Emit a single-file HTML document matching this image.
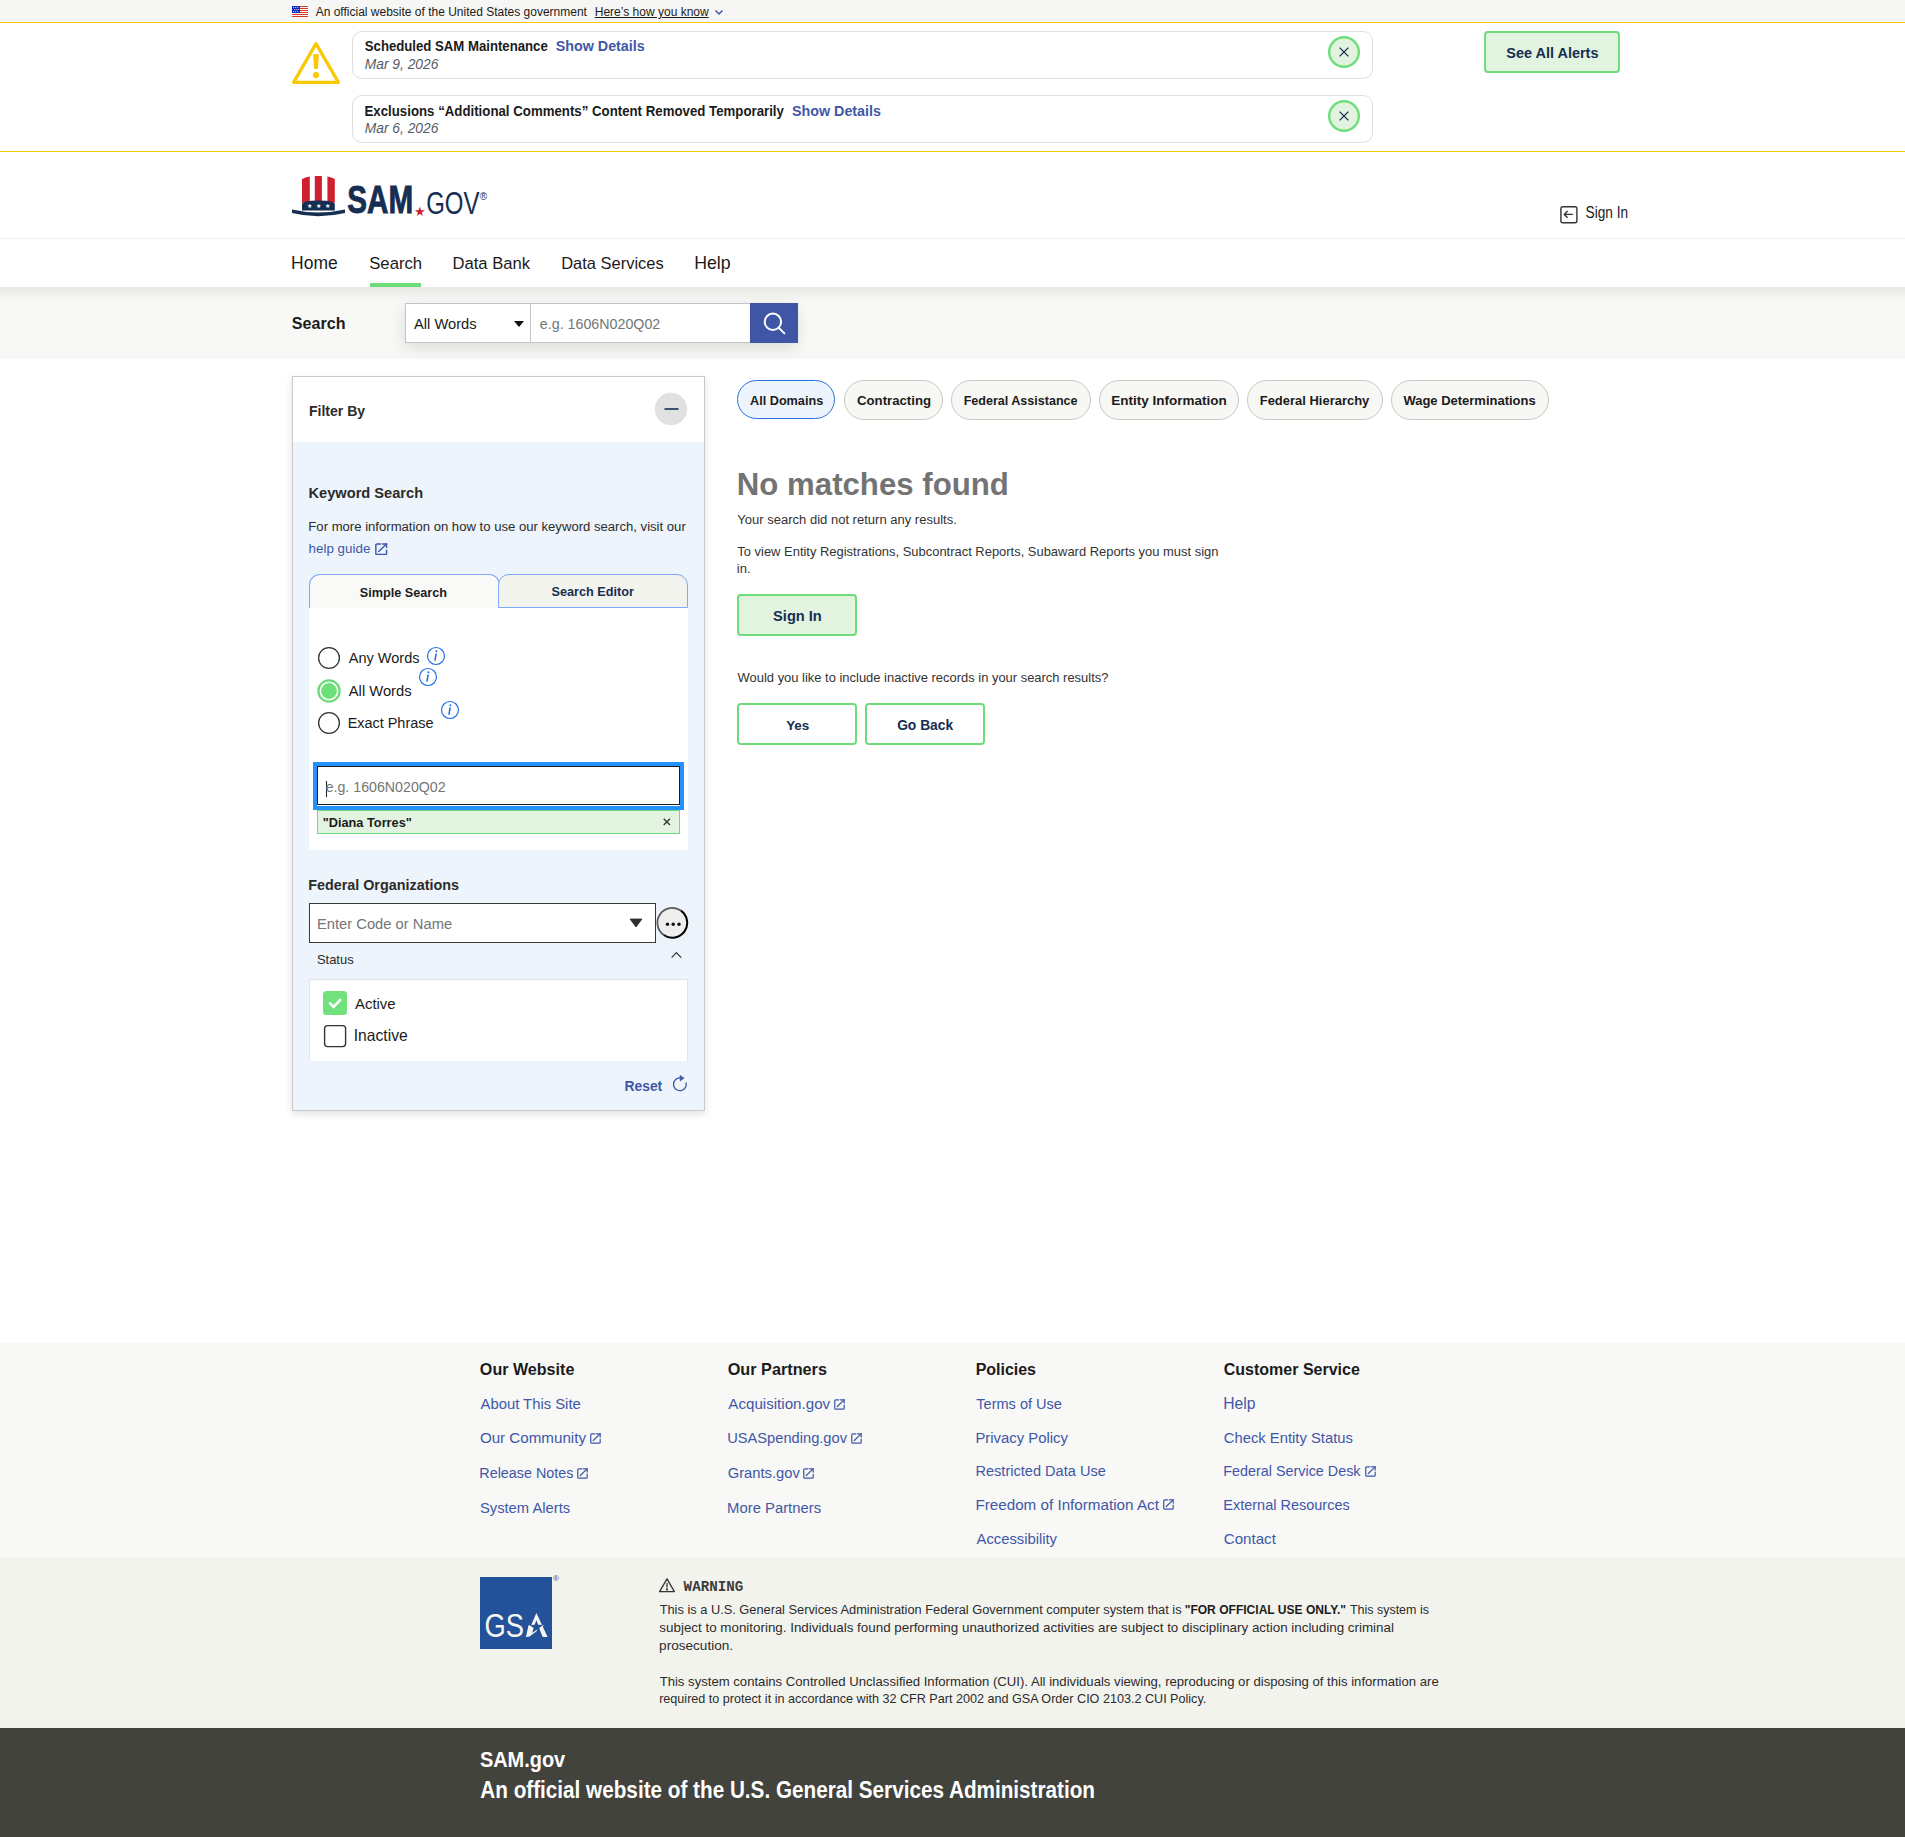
<!DOCTYPE html><html><head><meta charset="utf-8"><style>html,body{margin:0;padding:0;}body{width:1905px;height:1837px;position:relative;overflow:hidden;background:#fff;font-family:"Liberation Sans",sans-serif;}.t{position:absolute;white-space:nowrap;line-height:1;}</style></head><body>
<div style="position:absolute;left:0px;top:0px;width:1905px;height:22px;background:#f6f6f5;"></div>
<div style="position:absolute;left:0px;top:22px;width:1905px;height:1px;background:#f9c800;"></div>
<div style="position:absolute;left:0px;top:151px;width:1905px;height:1px;background:#f9c800;"></div>
<svg style="position:absolute;left:292px;top:5px" width="16" height="12" viewBox="0 0 16 12"><rect width="16" height="12" fill="#fff"/><rect x="0" y="1" width="16" height="1" fill="#d83a1f"/><rect x="0" y="3" width="16" height="1" fill="#d83a1f"/><rect x="0" y="5" width="16" height="1" fill="#d83a1f"/><rect x="0" y="7" width="16" height="1" fill="#d83a1f"/><rect x="0" y="9" width="16" height="1" fill="#d83a1f"/><rect x="0" y="11" width="16" height="1" fill="#d83a1f"/><rect x="0" y="1" width="8" height="7" fill="#0b28b8"/><circle cx="1.7" cy="2.5" r="0.55" fill="#fff"/><circle cx="3.7" cy="2.5" r="0.55" fill="#fff"/><circle cx="5.7" cy="2.5" r="0.55" fill="#fff"/><circle cx="2.7" cy="4.5" r="0.55" fill="#fff"/><circle cx="4.7" cy="4.5" r="0.55" fill="#fff"/><circle cx="6.7" cy="4.5" r="0.55" fill="#fff"/><circle cx="1.7" cy="6.5" r="0.55" fill="#fff"/><circle cx="3.7" cy="6.5" r="0.55" fill="#fff"/><circle cx="5.7" cy="6.5" r="0.55" fill="#fff"/></svg>
<svg style="position:absolute;left:713px;top:7px" width="12" height="10" viewBox="0 0 12 10" fill="none" stroke="#3f57a6" stroke-width="1.5"><path d="M2.5 3.5 L6 7 L9.5 3.5"/></svg>
<svg style="position:absolute;left:288px;top:38px" width="57" height="50" viewBox="0 0 57 50"><path d="M28 5.6 L5.6 44.4 H50.4 Z" fill="none" stroke="#f9c800" stroke-width="3.2" stroke-linejoin="round"/><path d="M25.2 17 Q25.2 15.9 26.3 15.9 H29.7 Q30.8 15.9 30.8 17 L30 30.2 Q29.9 31 29 31 H27 Q26.1 31 26 30.2 Z" fill="#f9c800"/><circle cx="28" cy="37" r="3.1" fill="#f9c800"/></svg>
<div style="position:absolute;left:352px;top:31px;width:1019px;height:46px;border:1px solid #dcdedf;border-radius:10px;background:#fff;"></div>
<svg style="position:absolute;left:1327px;top:35px" width="34" height="34" viewBox="0 0 34 34"><circle cx="17" cy="17" r="14.8" fill="#e2f4e0" stroke="#6ddc79" stroke-width="2.4"/><path d="M12.6 12.6 L21.4 21.4 M21.4 12.6 L12.6 21.4" stroke="#162e51" stroke-width="1.3"/></svg>
<div style="position:absolute;left:352px;top:95px;width:1019px;height:46px;border:1px solid #dcdedf;border-radius:10px;background:#fff;"></div>
<svg style="position:absolute;left:1327px;top:99px" width="34" height="34" viewBox="0 0 34 34"><circle cx="17" cy="17" r="14.8" fill="#e2f4e0" stroke="#6ddc79" stroke-width="2.4"/><path d="M12.6 12.6 L21.4 21.4 M21.4 12.6 L12.6 21.4" stroke="#162e51" stroke-width="1.3"/></svg>
<div style="position:absolute;left:1484px;top:31px;width:132px;height:38px;border:2px solid #6ddc79;border-radius:4px;background:#e2f4e0;"></div>
<div style="position:absolute;left:0px;top:238px;width:1905px;height:1px;background:#f1f1ee;"></div>
<svg style="position:absolute;left:290px;top:174px" width="200" height="44" viewBox="0 0 200 44"><path d="M12 5 Q15.5 3.3 19.8 2.6 V28.8 H12 Z" fill="#d0202f"/><path d="M24.8 2 H31.9 V28.8 H24.8 Z" fill="#d0202f"/><path d="M37.4 2.6 Q41.7 3.3 44.8 5 V28.8 H37.4 Z" fill="#d0202f"/><path d="M12 36.5 V30.5 Q12 26.6 28.4 26.6 Q44.8 26.6 44.8 30.5 V36.5 Z" fill="#162e51"/><path d="M2 35.4 Q28 41.5 55 35.4 V39 Q28 45.5 2 39 Z" fill="#162e51"/><text x="16.6" y="34.2" font-size="6" fill="#fff" font-family="Liberation Sans">★</text><text x="25.6" y="34.2" font-size="6" fill="#fff" font-family="Liberation Sans">★</text><text x="34.6" y="34.2" font-size="6" fill="#fff" font-family="Liberation Sans">★</text><text x="57.3" y="39" font-size="38.3" font-weight="700" fill="#162e51" stroke="#162e51" stroke-width="0.9" font-family="Liberation Sans" textLength="65.8" lengthAdjust="spacingAndGlyphs">SAM</text><text x="123.5" y="41.5" font-size="13" fill="#d0202f" font-family="Liberation Sans">★</text><text x="136.2" y="39.6" font-size="32" fill="#162e51" font-family="Liberation Sans" textLength="53.3" lengthAdjust="spacingAndGlyphs">GOV</text><text x="189.8" y="26" font-size="10" fill="#162e51" font-family="Liberation Sans">®</text></svg>
<svg style="position:absolute;left:1559px;top:205px" width="20" height="20" viewBox="0 0 20 20" fill="none" stroke="#333" stroke-width="1.4"><rect x="1.9" y="1.8" width="16" height="16" rx="2"/><path d="M5.4 9.4 H13.9 M8.6 6.1 L5.3 9.4 L8.6 12.7" stroke-linejoin="round"/></svg>
<div style="position:absolute;left:370px;top:283px;width:51px;height:4px;background:#6ddc79;"></div>
<div style="position:absolute;left:0px;top:287px;width:1905px;height:72px;background:#f8f8f7;"></div>
<div style="position:absolute;left:0px;top:287px;width:1905px;height:14px;background:linear-gradient(rgba(0,0,0,0.07),rgba(0,0,0,0));"></div>
<div style="position:absolute;left:405px;top:303px;width:392px;height:40px;box-shadow:0 5px 16px rgba(0,0,0,0.12);"></div>
<div style="position:absolute;left:405px;top:303px;width:125px;height:38px;border:1px solid #c4c4c4;background:#fff;"></div>
<svg style="position:absolute;left:513px;top:320px" width="12" height="8" viewBox="0 0 12 8"><path d="M1 1 H11 L6 7 Z" fill="#111"/></svg>
<div style="position:absolute;left:530px;top:303px;width:219px;height:38px;border:1px solid #c4c4c4;border-left:1px solid #c4c4c4;background:#fff;"></div>
<div style="position:absolute;left:750px;top:303px;width:48px;height:40px;background:#3f56a6;"></div>
<svg style="position:absolute;left:760px;top:310px" width="28" height="28" viewBox="0 0 28 28" fill="none" stroke="#fff" stroke-width="2"><circle cx="12.9" cy="11.8" r="8.2"/><path d="M18.6 17.6 L24.4 23.4" stroke-linecap="round"/></svg>
<div style="position:absolute;left:292px;top:376px;width:411px;height:733px;border:1px solid #c9c9c9;background:#fff;box-shadow:0 3px 8px rgba(0,0,0,0.12);"></div>
<div style="position:absolute;left:293px;top:442px;width:411px;height:668px;background:#edf4fb;"></div>
<svg style="position:absolute;left:654px;top:392px" width="34" height="34" viewBox="0 0 34 34"><circle cx="17" cy="17" r="16.2" fill="#e1e1e1"/><path d="M10.5 17 H24.5" stroke="#162e51" stroke-width="1.6"/></svg>
<svg style="position:absolute;left:375px;top:542.5px" width="12.5" height="12.5" viewBox="0 0 12 12" fill="none" stroke="#3f57a6" stroke-width="1.35" stroke-linecap="round"><path d="M5.2 0.9 H1.9 Q0.8 0.9 0.8 2 V10 Q0.8 11.1 1.9 11.1 H10 Q11.1 11.1 11.1 10 V6.8"/><path d="M7 0.9 H11.1 V4.4"/><path d="M11 1 L3.6 8.2"/></svg>
<div style="position:absolute;left:309px;top:574px;width:189px;height:34px;border:1px solid #7eaaf8;border-bottom:none;border-radius:11px 11px 0 0;background:#f9f9f7;"></div>
<div style="position:absolute;left:498px;top:574px;width:188px;height:32px;border:1px solid #7eaaf8;border-radius:11px 11px 0 0;background:#f3f3ee;"></div>
<div style="position:absolute;left:309px;top:608px;width:379px;height:242px;background:#fff;"></div>
<svg style="position:absolute;left:316px;top:645px" width="28" height="92" viewBox="0 0 28 92"><circle cx="13" cy="13" r="10.4" fill="#fff" stroke="#333" stroke-width="1.3"/><circle cx="13" cy="46" r="10.6" fill="#fff" stroke="#6bdc79" stroke-width="2.3"/><circle cx="13" cy="46" r="7.9" fill="#6ddf7b"/><circle cx="13" cy="78" r="10.4" fill="#fff" stroke="#333" stroke-width="1.3"/></svg>
<svg style="position:absolute;left:426.2px;top:646.0px" width="20" height="20" viewBox="0 0 20 20"><circle cx="10" cy="10" r="8.5" fill="none" stroke="#1f6ee4" stroke-width="1.2"/><circle cx="10.4" cy="5.2" r="0.95" fill="#1f6ee4"/><path d="M10.1 8 L9 14.2" stroke="#1f6ee4" stroke-width="1.5" stroke-linecap="round"/></svg>
<svg style="position:absolute;left:418.2px;top:667.1px" width="20" height="20" viewBox="0 0 20 20"><circle cx="10" cy="10" r="8.5" fill="none" stroke="#1f6ee4" stroke-width="1.2"/><circle cx="10.4" cy="5.2" r="0.95" fill="#1f6ee4"/><path d="M10.1 8 L9 14.2" stroke="#1f6ee4" stroke-width="1.5" stroke-linecap="round"/></svg>
<svg style="position:absolute;left:440.3px;top:700.2px" width="20" height="20" viewBox="0 0 20 20"><circle cx="10" cy="10" r="8.5" fill="none" stroke="#1f6ee4" stroke-width="1.2"/><circle cx="10.4" cy="5.2" r="0.95" fill="#1f6ee4"/><path d="M10.1 8 L9 14.2" stroke="#1f6ee4" stroke-width="1.5" stroke-linecap="round"/></svg>
<div style="position:absolute;left:313px;top:762px;width:363px;height:39.5px;border:4px solid #2491ff;"></div>
<div style="position:absolute;left:317px;top:766px;width:363px;height:39px;border:1.5px solid #1b1b1b;background:#fff;box-sizing:border-box;"></div>
<div style="position:absolute;left:326px;top:781px;width:1px;height:16px;background:#1b1b1b;"></div>
<div style="position:absolute;left:317px;top:810px;width:361px;height:22px;border:1px solid #6ddc79;background:#e2f4e0;"></div>
<svg style="position:absolute;left:661px;top:816px" width="12" height="12" viewBox="0 0 12 12"><path d="M2.7 2.7 L9 9 M9 2.7 L2.7 9" stroke="#333" stroke-width="1.3"/></svg>
<div style="position:absolute;left:309px;top:903px;width:345px;height:38px;border:1.4px solid #3a3a35;background:#fff;"></div>
<svg style="position:absolute;left:629px;top:918px" width="14" height="10" viewBox="0 0 14 10"><path d="M1 1 H13 L7 9 Z" fill="#2e2e2a" stroke="#2e2e2a" stroke-width="0.8" stroke-linejoin="round"/></svg>
<svg style="position:absolute;left:655px;top:906px" width="34" height="34" viewBox="0 0 34 34"><circle cx="17.3" cy="16.8" r="14.9" fill="#eeeeee"/><path d="M25.85 4.59 A14.9 14.9 0 0 0 8.75 29.01" fill="none" stroke="#5a5a5a" stroke-width="1.8"/><path d="M8.75 29.01 A14.9 14.9 0 0 0 25.85 4.59" fill="none" stroke="#000" stroke-width="2"/><circle cx="12.5" cy="18.2" r="1.7" fill="#111"/><circle cx="18.2" cy="18.2" r="1.7" fill="#111"/><circle cx="24" cy="18.2" r="1.7" fill="#111"/></svg>
<svg style="position:absolute;left:669px;top:949px" width="16" height="12" viewBox="0 0 16 12" fill="none" stroke="#333" stroke-width="1.2"><path d="M2.6 8.6 L7.4 3.6 L12.2 8.6"/></svg>
<div style="position:absolute;left:309px;top:979px;width:377px;height:81px;border:1px solid #e3e3e3;border-bottom:none;background:#fff;"></div>
<svg style="position:absolute;left:322px;top:990px" width="26" height="26" viewBox="0 0 26 26"><rect x="1" y="1" width="24" height="24" rx="3.5" fill="#70e17b"/><path d="M7.2 12.6 L11.6 16.8 L19 9.2" fill="none" stroke="#fff" stroke-width="2.6"/></svg>
<svg style="position:absolute;left:322px;top:1023px" width="26" height="26" viewBox="0 0 26 26"><rect x="2.6" y="2.6" width="21" height="21" rx="3" fill="#fff" stroke="#333" stroke-width="1.4"/></svg>
<svg style="position:absolute;left:670px;top:1074px" width="20" height="20" viewBox="0 0 20 20" fill="none" stroke="#3f57a6" stroke-width="1.3"><path d="M16 8.4 A6.4 6.4 0 1 1 10.2 3.9"/><path d="M10 1.4 L14.1 4.1 L10.2 6.9 Z" fill="#3f57a6" stroke-width="0.6"/></svg>
<div style="position:absolute;left:737.1px;top:380px;width:95.5px;height:37px;border:1.5px solid #2b72de;border-radius:20px;background:#eef4fb;"></div>
<div style="position:absolute;left:844.1px;top:380px;width:96.5px;height:37.5px;border:1px solid #c9c9c6;border-radius:20px;background:#f7f7f4;"></div>
<div style="position:absolute;left:951.1px;top:380px;width:137.4999999999999px;height:37.5px;border:1px solid #c9c9c6;border-radius:20px;background:#f7f7f4;"></div>
<div style="position:absolute;left:1099.0px;top:380px;width:137.70000000000005px;height:37.5px;border:1px solid #c9c9c6;border-radius:20px;background:#f7f7f4;"></div>
<div style="position:absolute;left:1247.1px;top:380px;width:133.60000000000014px;height:37.5px;border:1px solid #c9c9c6;border-radius:20px;background:#f7f7f4;"></div>
<div style="position:absolute;left:1391.2px;top:380px;width:155.5px;height:37.5px;border:1px solid #c9c9c6;border-radius:20px;background:#f7f7f4;"></div>
<div style="position:absolute;left:737px;top:594px;width:116px;height:38px;border:2px solid #6ddc79;border-radius:4px;background:#e2f4e0;"></div>
<div style="position:absolute;left:737px;top:703px;width:116px;height:38px;border:2px solid #6ddc79;border-radius:4px;background:#fff;"></div>
<div style="position:absolute;left:865px;top:703px;width:116px;height:38px;border:2px solid #6ddc79;border-radius:4px;background:#fff;"></div>
<div style="position:absolute;left:0px;top:1343px;width:1905px;height:214px;background:#f8f8f6;"></div>
<div style="position:absolute;left:0px;top:1557px;width:1905px;height:171px;background:#f3f3ee;"></div>
<div style="position:absolute;left:0px;top:1728px;width:1905px;height:109px;background:#43433e;"></div>
<svg style="position:absolute;left:590.3px;top:1432.5px" width="11" height="11" viewBox="0 0 12 12" fill="none" stroke="#3f57a6" stroke-width="1.35" stroke-linecap="round"><path d="M5.2 0.9 H1.9 Q0.8 0.9 0.8 2 V10 Q0.8 11.1 1.9 11.1 H10 Q11.1 11.1 11.1 10 V6.8"/><path d="M7 0.9 H11.1 V4.4"/><path d="M11 1 L3.6 8.2"/></svg>
<svg style="position:absolute;left:576.7px;top:1467.5px" width="11" height="11" viewBox="0 0 12 12" fill="none" stroke="#3f57a6" stroke-width="1.35" stroke-linecap="round"><path d="M5.2 0.9 H1.9 Q0.8 0.9 0.8 2 V10 Q0.8 11.1 1.9 11.1 H10 Q11.1 11.1 11.1 10 V6.8"/><path d="M7 0.9 H11.1 V4.4"/><path d="M11 1 L3.6 8.2"/></svg>
<svg style="position:absolute;left:834.3px;top:1398.7px" width="11" height="11" viewBox="0 0 12 12" fill="none" stroke="#3f57a6" stroke-width="1.35" stroke-linecap="round"><path d="M5.2 0.9 H1.9 Q0.8 0.9 0.8 2 V10 Q0.8 11.1 1.9 11.1 H10 Q11.1 11.1 11.1 10 V6.8"/><path d="M7 0.9 H11.1 V4.4"/><path d="M11 1 L3.6 8.2"/></svg>
<svg style="position:absolute;left:850.7px;top:1433px" width="11" height="11" viewBox="0 0 12 12" fill="none" stroke="#3f57a6" stroke-width="1.35" stroke-linecap="round"><path d="M5.2 0.9 H1.9 Q0.8 0.9 0.8 2 V10 Q0.8 11.1 1.9 11.1 H10 Q11.1 11.1 11.1 10 V6.8"/><path d="M7 0.9 H11.1 V4.4"/><path d="M11 1 L3.6 8.2"/></svg>
<svg style="position:absolute;left:803.4px;top:1468px" width="11" height="11" viewBox="0 0 12 12" fill="none" stroke="#3f57a6" stroke-width="1.35" stroke-linecap="round"><path d="M5.2 0.9 H1.9 Q0.8 0.9 0.8 2 V10 Q0.8 11.1 1.9 11.1 H10 Q11.1 11.1 11.1 10 V6.8"/><path d="M7 0.9 H11.1 V4.4"/><path d="M11 1 L3.6 8.2"/></svg>
<svg style="position:absolute;left:1162.7px;top:1499.3px" width="11" height="11" viewBox="0 0 12 12" fill="none" stroke="#3f57a6" stroke-width="1.35" stroke-linecap="round"><path d="M5.2 0.9 H1.9 Q0.8 0.9 0.8 2 V10 Q0.8 11.1 1.9 11.1 H10 Q11.1 11.1 11.1 10 V6.8"/><path d="M7 0.9 H11.1 V4.4"/><path d="M11 1 L3.6 8.2"/></svg>
<svg style="position:absolute;left:1364.6px;top:1465.6px" width="11" height="11" viewBox="0 0 12 12" fill="none" stroke="#3f57a6" stroke-width="1.35" stroke-linecap="round"><path d="M5.2 0.9 H1.9 Q0.8 0.9 0.8 2 V10 Q0.8 11.1 1.9 11.1 H10 Q11.1 11.1 11.1 10 V6.8"/><path d="M7 0.9 H11.1 V4.4"/><path d="M11 1 L3.6 8.2"/></svg>
<svg style="position:absolute;left:480px;top:1577px" width="72" height="72" viewBox="0 0 72 72"><rect width="72" height="72" fill="#23519a"/><text x="4.4" y="60" font-size="33" fill="#f7f7f2" font-family="Liberation Sans" textLength="39.5" lengthAdjust="spacingAndGlyphs">GS</text><path d="M56.4 36 L67.6 60 H62.8 L56.4 45.5 L50.6 58.2 L46 60 Z" fill="#f7f7f2"/><path d="M48.5 48.3 H64.2 L61.5 50.6 L49.6 59.6 L46 60 Z" fill="#f7f7f2"/><path d="M56.40 43.00 L58.10 47.85 L63.25 47.98 L59.16 51.10 L60.63 56.02 L56.40 53.10 L52.17 56.02 L53.64 51.10 L49.55 47.98 L54.70 47.85 Z" fill="#23519a"/></svg>
<div style="position:absolute;left:553px;top:1574px;font-size:8px;color:#23519a;font-family:Liberation Sans">®</div>
<svg style="position:absolute;left:658px;top:1577px" width="18" height="16" viewBox="0 0 18 16" fill="none" stroke="#333" stroke-width="1.3"><path d="M9 1.8 L1.6 14.6 H16.4 Z" stroke-linejoin="round"/><path d="M9 6 V10.6"/><circle cx="9" cy="12.4" r="0.5" fill="#333"/></svg>
<span class="t" id="t0" style="left:315.70px;top:6px;font-size:12.01px;font-weight:400;color:#1b1b1b;font-family:'Liberation Sans', sans-serif;">An official website of the United States government</span>
<span class="t" id="t1" style="left:594.74px;top:6px;font-size:12.03px;font-weight:400;color:#1b1b1b;font-family:'Liberation Sans', sans-serif;text-decoration:underline;text-underline-offset:1px;">Here’s how you know</span>
<span class="t" id="t2" style="transform:scaleY(1.102);transform-origin:0 11px;left:364.77px;top:40px;font-size:13.18px;font-weight:700;color:#1b1b1b;font-family:'Liberation Sans', sans-serif;">Scheduled SAM Maintenance</span>
<span class="t" id="t3" style="left:555.73px;top:39px;font-size:14.30px;font-weight:700;color:#3f57a6;font-family:'Liberation Sans', sans-serif;">Show Details</span>
<span class="t" id="t4" style="left:364.75px;top:58px;font-size:13.81px;font-weight:400;color:#565c65;font-family:'Liberation Sans', sans-serif;font-style:italic;">Mar 9, 2026</span>
<span class="t" id="t5" style="transform:scaleY(1.097);transform-origin:0 11px;left:364.51px;top:105px;font-size:13.25px;font-weight:700;color:#1b1b1b;font-family:'Liberation Sans', sans-serif;">Exclusions “Additional Comments” Content Removed Temporarily</span>
<span class="t" id="t6" style="left:791.93px;top:104px;font-size:14.32px;font-weight:700;color:#3f57a6;font-family:'Liberation Sans', sans-serif;">Show Details</span>
<span class="t" id="t7" style="left:364.75px;top:122px;font-size:13.81px;font-weight:400;color:#565c65;font-family:'Liberation Sans', sans-serif;font-style:italic;">Mar 6, 2026</span>
<span class="t" id="t8" style="left:1506.32px;top:46px;font-size:14.46px;font-weight:700;color:#162e51;font-family:'Liberation Sans', sans-serif;">See All Alerts</span>
<span class="t" id="t9" style="transform:scaleY(1.156);transform-origin:0 11px;left:1585.55px;top:207px;font-size:13.70px;font-weight:400;color:#1b1b1b;font-family:'Liberation Sans', sans-serif;">Sign In</span>
<span class="t" id="t10" style="left:291.10px;top:255px;font-size:17.48px;font-weight:400;color:#1b1b1b;font-family:'Liberation Sans', sans-serif;">Home</span>
<span class="t" id="t11" style="left:369.23px;top:256px;font-size:16.70px;font-weight:400;color:#1b1b1b;font-family:'Liberation Sans', sans-serif;">Search</span>
<span class="t" id="t12" style="left:452.47px;top:256px;font-size:16.64px;font-weight:400;color:#1b1b1b;font-family:'Liberation Sans', sans-serif;">Data Bank</span>
<span class="t" id="t13" style="left:561.18px;top:255px;font-size:16.48px;font-weight:400;color:#1b1b1b;font-family:'Liberation Sans', sans-serif;">Data Services</span>
<span class="t" id="t14" style="left:694.18px;top:255px;font-size:17.73px;font-weight:400;color:#1b1b1b;font-family:'Liberation Sans', sans-serif;">Help</span>
<span class="t" id="t15" style="left:291.86px;top:315px;font-size:16.08px;font-weight:700;color:#1b1b1b;font-family:'Liberation Sans', sans-serif;">Search</span>
<span class="t" id="t16" style="left:414.00px;top:317px;font-size:14.69px;font-weight:400;color:#1b1b1b;font-family:'Liberation Sans', sans-serif;">All Words</span>
<span class="t" id="t17" style="left:539.83px;top:317px;font-size:14.25px;font-weight:400;color:#71767a;font-family:'Liberation Sans', sans-serif;">e.g. 1606N020Q02</span>
<span class="t" id="t18" style="left:308.96px;top:404px;font-size:14.06px;font-weight:600;color:#2b2b2b;font-family:'Liberation Sans', sans-serif;">Filter By</span>
<span class="t" id="t19" style="left:308.52px;top:486px;font-size:14.64px;font-weight:700;color:#2b2b2b;font-family:'Liberation Sans', sans-serif;">Keyword Search</span>
<span class="t" id="t20" style="left:308.35px;top:520px;font-size:13.12px;font-weight:400;color:#2b2b2b;font-family:'Liberation Sans', sans-serif;">For more information on how to use our keyword search, visit our</span>
<span class="t" id="t21" style="left:308.60px;top:542px;font-size:13.38px;font-weight:400;color:#3f57a6;font-family:'Liberation Sans', sans-serif;">help guide</span>
<span class="t" id="t22" style="left:359.79px;top:587px;font-size:12.66px;font-weight:700;color:#1b1b1b;font-family:'Liberation Sans', sans-serif;">Simple Search</span>
<span class="t" id="t23" style="left:551.49px;top:586px;font-size:12.68px;font-weight:700;color:#162e51;font-family:'Liberation Sans', sans-serif;">Search Editor</span>
<span class="t" id="t24" style="left:348.80px;top:651px;font-size:14.50px;font-weight:400;color:#1b1b1b;font-family:'Liberation Sans', sans-serif;">Any Words</span>
<span class="t" id="t25" style="left:348.80px;top:684px;font-size:14.74px;font-weight:400;color:#1b1b1b;font-family:'Liberation Sans', sans-serif;">All Words</span>
<span class="t" id="t26" style="left:347.64px;top:716px;font-size:14.45px;font-weight:400;color:#1b1b1b;font-family:'Liberation Sans', sans-serif;">Exact Phrase</span>
<span class="t" id="t27" style="left:325.63px;top:780px;font-size:14.21px;font-weight:400;color:#757575;font-family:'Liberation Sans', sans-serif;">e.g. 1606N020Q02</span>
<span class="t" id="t28" style="left:322.63px;top:817px;font-size:12.77px;font-weight:700;color:#1b1b1b;font-family:'Liberation Sans', sans-serif;">"Diana Torres"</span>
<span class="t" id="t29" style="left:308.14px;top:878px;font-size:14.36px;font-weight:600;color:#2b2b2b;font-family:'Liberation Sans', sans-serif;">Federal Organizations</span>
<span class="t" id="t30" style="left:316.92px;top:917px;font-size:14.75px;font-weight:400;color:#757575;font-family:'Liberation Sans', sans-serif;">Enter Code or Name</span>
<span class="t" id="t31" style="left:316.88px;top:954px;font-size:12.97px;font-weight:400;color:#2b2b2b;font-family:'Liberation Sans', sans-serif;">Status</span>
<span class="t" id="t32" style="left:355.00px;top:997px;font-size:14.93px;font-weight:400;color:#1b1b1b;font-family:'Liberation Sans', sans-serif;">Active</span>
<span class="t" id="t33" style="left:353.75px;top:1028px;font-size:15.66px;font-weight:400;color:#1b1b1b;font-family:'Liberation Sans', sans-serif;">Inactive</span>
<span class="t" id="t34" style="left:624.47px;top:1080px;font-size:13.87px;font-weight:700;color:#3f57a6;font-family:'Liberation Sans', sans-serif;">Reset</span>
<span class="t" id="t35" style="left:750.05px;top:395px;font-size:12.67px;font-weight:700;color:#1b1b1b;font-family:'Liberation Sans', sans-serif;">All Domains</span>
<span class="t" id="t36" style="left:857.07px;top:394px;font-size:13.18px;font-weight:700;color:#1b1b1b;font-family:'Liberation Sans', sans-serif;">Contracting</span>
<span class="t" id="t37" style="left:963.65px;top:395px;font-size:12.56px;font-weight:700;color:#1b1b1b;font-family:'Liberation Sans', sans-serif;">Federal Assistance</span>
<span class="t" id="t38" style="left:1111.19px;top:394px;font-size:13.50px;font-weight:700;color:#1b1b1b;font-family:'Liberation Sans', sans-serif;">Entity Information</span>
<span class="t" id="t39" style="left:1259.72px;top:394px;font-size:12.98px;font-weight:700;color:#1b1b1b;font-family:'Liberation Sans', sans-serif;">Federal Hierarchy</span>
<span class="t" id="t40" style="left:1403.40px;top:394px;font-size:12.99px;font-weight:700;color:#1b1b1b;font-family:'Liberation Sans', sans-serif;">Wage Determinations</span>
<span class="t" id="t41" style="left:736.83px;top:469px;font-size:31.19px;font-weight:700;color:#737373;font-family:'Liberation Sans', sans-serif;">No matches found</span>
<span class="t" id="t42" style="left:737.34px;top:513px;font-size:13.03px;font-weight:400;color:#333;font-family:'Liberation Sans', sans-serif;">Your search did not return any results.</span>
<span class="t" id="t43" style="left:737.34px;top:546px;font-size:12.94px;font-weight:400;color:#333;font-family:'Liberation Sans', sans-serif;">To view Entity Registrations, Subcontract Reports, Subaward Reports you must sign</span>
<span class="t" id="t44" style="left:736.82px;top:562px;font-size:13.00px;font-weight:400;color:#333;font-family:'Liberation Sans', sans-serif;">in.</span>
<span class="t" id="t45" style="left:773.12px;top:609px;font-size:14.60px;font-weight:700;color:#162e51;font-family:'Liberation Sans', sans-serif;">Sign In</span>
<span class="t" id="t46" style="left:737.60px;top:672px;font-size:12.95px;font-weight:400;color:#333;font-family:'Liberation Sans', sans-serif;">Would you like to include inactive records in your search results?</span>
<span class="t" id="t47" style="left:786.13px;top:719px;font-size:13.43px;font-weight:700;color:#162e51;font-family:'Liberation Sans', sans-serif;">Yes</span>
<span class="t" id="t48" style="left:897.15px;top:719px;font-size:13.81px;font-weight:700;color:#162e51;font-family:'Liberation Sans', sans-serif;">Go Back</span>
<span class="t" id="t49" style="left:479.86px;top:1361px;font-size:16.10px;font-weight:700;color:#1b1b1b;font-family:'Liberation Sans', sans-serif;">Our Website</span>
<span class="t" id="t50" style="left:727.65px;top:1361px;font-size:16.26px;font-weight:700;color:#1b1b1b;font-family:'Liberation Sans', sans-serif;">Our Partners</span>
<span class="t" id="t51" style="left:975.64px;top:1362px;font-size:15.98px;font-weight:700;color:#1b1b1b;font-family:'Liberation Sans', sans-serif;">Policies</span>
<span class="t" id="t52" style="left:1223.76px;top:1362px;font-size:16.01px;font-weight:700;color:#1b1b1b;font-family:'Liberation Sans', sans-serif;">Customer Service</span>
<span class="t" id="t53" style="left:480.50px;top:1397px;font-size:14.84px;font-weight:400;color:#3f57a6;font-family:'Liberation Sans', sans-serif;">About This Site</span>
<span class="t" id="t54" style="left:479.89px;top:1430px;font-size:15.17px;font-weight:400;color:#3f57a6;font-family:'Liberation Sans', sans-serif;">Our Community</span>
<span class="t" id="t55" style="left:479.35px;top:1466px;font-size:14.35px;font-weight:400;color:#3f57a6;font-family:'Liberation Sans', sans-serif;">Release Notes</span>
<span class="t" id="t56" style="left:479.91px;top:1501px;font-size:14.77px;font-weight:400;color:#3f57a6;font-family:'Liberation Sans', sans-serif;">System Alerts</span>
<span class="t" id="t57" style="left:728.30px;top:1396px;font-size:15.15px;font-weight:400;color:#3f57a6;font-family:'Liberation Sans', sans-serif;">Acquisition.gov</span>
<span class="t" id="t58" style="left:727.13px;top:1431px;font-size:14.68px;font-weight:400;color:#3f57a6;font-family:'Liberation Sans', sans-serif;">USASpending.gov</span>
<span class="t" id="t59" style="left:727.71px;top:1466px;font-size:14.75px;font-weight:400;color:#3f57a6;font-family:'Liberation Sans', sans-serif;">Grants.gov</span>
<span class="t" id="t60" style="left:727.11px;top:1501px;font-size:14.84px;font-weight:400;color:#3f57a6;font-family:'Liberation Sans', sans-serif;">More Partners</span>
<span class="t" id="t61" style="left:976.31px;top:1397px;font-size:14.54px;font-weight:400;color:#3f57a6;font-family:'Liberation Sans', sans-serif;">Terms of Use</span>
<span class="t" id="t62" style="left:975.41px;top:1431px;font-size:14.87px;font-weight:400;color:#3f57a6;font-family:'Liberation Sans', sans-serif;">Privacy Policy</span>
<span class="t" id="t63" style="left:975.43px;top:1464px;font-size:14.59px;font-weight:400;color:#3f57a6;font-family:'Liberation Sans', sans-serif;">Restricted Data Use</span>
<span class="t" id="t64" style="left:975.38px;top:1497px;font-size:15.22px;font-weight:400;color:#3f57a6;font-family:'Liberation Sans', sans-serif;">Freedom of Information Act</span>
<span class="t" id="t65" style="left:976.60px;top:1532px;font-size:14.78px;font-weight:400;color:#3f57a6;font-family:'Liberation Sans', sans-serif;">Accessibility</span>
<span class="t" id="t66" style="left:1223.15px;top:1396px;font-size:15.67px;font-weight:400;color:#3f57a6;font-family:'Liberation Sans', sans-serif;">Help</span>
<span class="t" id="t67" style="left:1223.81px;top:1431px;font-size:14.80px;font-weight:400;color:#3f57a6;font-family:'Liberation Sans', sans-serif;">Check Entity Status</span>
<span class="t" id="t68" style="left:1223.25px;top:1464px;font-size:14.37px;font-weight:400;color:#3f57a6;font-family:'Liberation Sans', sans-serif;">Federal Service Desk</span>
<span class="t" id="t69" style="left:1223.24px;top:1498px;font-size:14.51px;font-weight:400;color:#3f57a6;font-family:'Liberation Sans', sans-serif;">External Resources</span>
<span class="t" id="t70" style="left:1223.80px;top:1531px;font-size:15.12px;font-weight:400;color:#3f57a6;font-family:'Liberation Sans', sans-serif;">Contact</span>
<span class="t" id="t71" style="left:683.60px;top:1580px;font-size:14.23px;font-weight:700;color:#3d3d3d;font-family:'Liberation Mono', monospace;">WARNING</span>
<span class="t" id="t72" style="left:659.64px;top:1604px;font-size:12.82px;font-weight:400;color:#2b2b2b;font-family:'Liberation Sans', sans-serif;">This is a U.S. General Services Administration Federal Government computer system that is</span>
<span class="t" id="t73" style="left:1184.68px;top:1604px;font-size:12.06px;font-weight:700;color:#1b1b1b;font-family:'Liberation Sans', sans-serif;">"FOR OFFICIAL USE ONLY."</span>
<span class="t" id="t74" style="left:1349.95px;top:1604px;font-size:12.47px;font-weight:400;color:#2b2b2b;font-family:'Liberation Sans', sans-serif;">This system is</span>
<span class="t" id="t75" style="left:659.36px;top:1621px;font-size:13.38px;font-weight:400;color:#2b2b2b;font-family:'Liberation Sans', sans-serif;">subject to monitoring. Individuals found performing unauthorized activities are subject to disciplinary action including criminal</span>
<span class="t" id="t76" style="left:659.08px;top:1639px;font-size:13.58px;font-weight:400;color:#2b2b2b;font-family:'Liberation Sans', sans-serif;">prosecution.</span>
<span class="t" id="t77" style="left:659.64px;top:1675px;font-size:13.14px;font-weight:400;color:#2b2b2b;font-family:'Liberation Sans', sans-serif;">This system contains Controlled Unclassified Information (CUI). All individuals viewing, reproducing or disposing of this information are</span>
<span class="t" id="t78" style="left:659.14px;top:1693px;font-size:12.60px;font-weight:400;color:#2b2b2b;font-family:'Liberation Sans', sans-serif;">required to protect it in accordance with 32 CFR Part 2002 and GSA Order CIO 2103.2 CUI Policy.</span>
<span class="t" id="t79" style="transform:scaleY(1.144);transform-origin:0 16px;left:479.90px;top:1751px;font-size:19.95px;font-weight:600;color:#fff;font-family:'Liberation Sans', sans-serif;">SAM.gov</span>
<span class="t" id="t80" style="transform:scaleY(1.123);transform-origin:0 17px;left:480.29px;top:1781px;font-size:20.71px;font-weight:600;color:#fff;font-family:'Liberation Sans', sans-serif;">An official website of the U.S. General Services Administration</span>
</body></html>
